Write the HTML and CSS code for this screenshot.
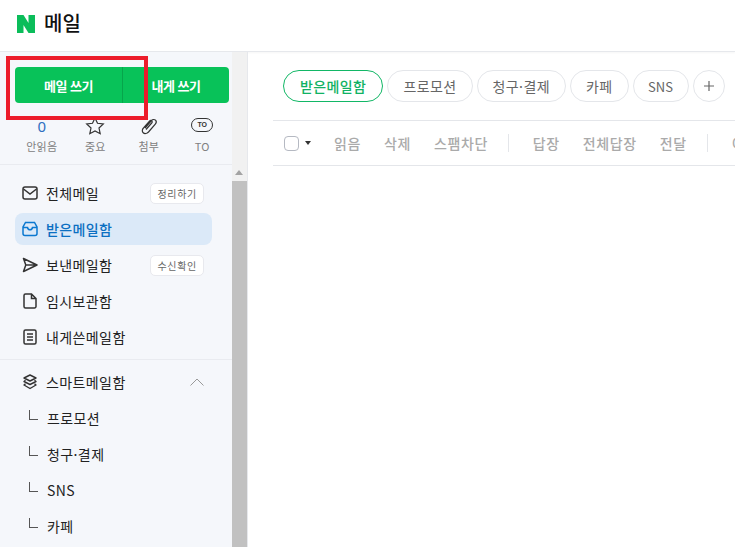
FILE: index.html
```html
<!DOCTYPE html>
<html lang="ko">
<head>
    <meta charset="UTF-8">
    <meta name="viewport" content="width=device-width, initial-scale=1.0">
    <title>메일</title>
    <link rel="stylesheet" href="styles.css">
</head>
<body>
    <div class="header">
        <svg class="logo" width="18" height="18" viewBox="0 0 18 18"><path d="M0 0h6.500l5 8V0H18v18h-6.500l-5-8v8H0z" fill="#0bbd5a"/></svg>
        <h1>메일</h1>
    </div>

    <div class="main">
        <div class="sidebar">
            <div class="sidebar-inner">
                <div class="compose">
                    <a class="compose-btn first">메일 쓰기</a>
                    <a class="compose-btn">내게 쓰기</a>
                </div>
                <div class="quick">
                    <div class="quick-item">
                        <span class="quick-num">0</span>
                        <span class="quick-label">안읽음</span>
                    </div>
                    <div class="quick-item">
                        <svg width="20" height="18" viewBox="0 0 20 18"><path d="M10 1l2.500 5.300 5.800.7-4.300 4 1.200 5.700L10 13.900l-5.200 2.800L6 11l-4.300-4 5.800-.7z" fill="none" stroke="#333" stroke-width="1.200"/></svg>
                        <span class="quick-label">중요</span>
                    </div>
                    <div class="quick-item">
                        <svg width="20" height="18" viewBox="0 0 20 18"><path d="M6 11l6.500-7.500c1.200-1.300 3-1.300 4-.3s.9 2.700-.2 4L9.500 15c-1.600 1.700-4 2-5.300.8S3 12.500 4.500 11l6-6.800c.7-.8 1.700-.8 2.300-.3s.5 1.400-.1 2.100L7 12.500" fill="none" stroke="#333" stroke-width="1.200"/></svg>
                        <span class="quick-label">첨부</span>
                    </div>
                    <div class="quick-item">
                        <span class="to-icon">TO</span>
                        <span class="quick-label">TO</span>
                    </div>
                </div>

                <ul class="nav">
                    <li class="nav-item">
                        <svg width="16" height="16" viewBox="0 0 16 16"><rect x="1" y="2" width="14" height="12" rx="2" fill="none" stroke="#333" stroke-width="1.500"/><path d="M1.500 4l6.500 5 6.500-5" fill="none" stroke="#333" stroke-width="1.500"/></svg>
                        <span class="nav-text">전체메일</span>
                        <span class="nav-tag">정리하기</span>
                    </li>
                    <li class="nav-item active">
                        <svg width="16" height="16" viewBox="0 0 16 16"><path d="M3.500 1.500h9L15 6v6.500a2 2 0 0 1-2 2H3a2 2 0 0 1-2-2V6z M1 6.500h4.500c.3 1.500 1.200 2.200 2.500 2.200s2.200-.7 2.500-2.200H15" fill="none" stroke="#0b78d0" stroke-width="1.500"/></svg>
                        <span class="nav-text">받은메일함</span>
                    </li>
                    <li class="nav-item">
                        <svg width="16" height="16" viewBox="0 0 16 16"><path d="M1.500 1.500L15 8 1.500 14.500 3.800 8zM3.800 8H15" fill="none" stroke="#333" stroke-width="1.500" stroke-linejoin="round"/></svg>
                        <span class="nav-text">보낸메일함</span>
                        <span class="nav-tag">수신확인</span>
                    </li>
                    <li class="nav-item">
                        <svg width="16" height="16" viewBox="0 0 16 16"><path d="M3.500 1h6L14 5.500V13.500a1.500 1.500 0 0 1-1.500 1.500h-9A1.500 1.500 0 0 1 2 13.500v-11A1.500 1.500 0 0 1 3.500 1zM9.500 1v4.500H14" fill="none" stroke="#333" stroke-width="1.500"/></svg>
                        <span class="nav-text">임시보관함</span>
                    </li>
                    <li class="nav-item">
                        <svg width="16" height="16" viewBox="0 0 16 16"><rect x="2" y="1" width="12" height="14" rx="1.500" fill="none" stroke="#333" stroke-width="1.500"/><path d="M5 5h6M5 8h6M5 11h6" stroke="#333" stroke-width="1.300"/></svg>
                        <span class="nav-text">내게쓴메일함</span>
                    </li>
                </ul>

                <ul class="nav smart">
                    <li class="nav-item">
                        <svg width="16" height="16" viewBox="0 0 16 16"><path d="M8 1l6 3-6 3-6-3zM3.500 6.200L2 7.500l6 3 6-3-1.500-1.300M3.500 9.700L2 11l6 3.500 6-3.500-1.500-1.300" fill="none" stroke="#333" stroke-width="1.400" stroke-linejoin="round"/></svg>
                        <span class="nav-text">스마트메일함</span>
                        <svg class="chevron" width="14" height="8" viewBox="0 0 14 8"><path d="M.5 7.500L7 1l6.500 6.500" fill="none" stroke="#999" stroke-width="1"/></svg>
                    </li>
                    <li class="sub-item"><span class="sub-mark"></span>프로모션</li>
                    <li class="sub-item"><span class="sub-mark"></span>청구·결제</li>
                    <li class="sub-item"><span class="sub-mark"></span>SNS</li>
                    <li class="sub-item"><span class="sub-mark"></span>카페</li>
                </ul>
            </div>
            <div class="scrollbar">
                <div class="scroll-up"></div>
                <div class="scroll-thumb"></div>
            </div>
        </div>

        <div class="content">
            <div class="tabs">
                <span class="tab selected">받은메일함</span>
                <span class="tab">프로모션</span>
                <span class="tab">청구·결제</span>
                <span class="tab">카페</span>
                <span class="tab latin">SNS</span>
                <span class="tab plus"><svg width="12" height="12" viewBox="0 0 12 12"><path d="M6 1v10M1 6h10" stroke="#666" stroke-width="1.200"/></svg></span>
            </div>
            <div class="toolbar">
                <span class="check"></span>
                <span class="caret"></span>
                <span class="tool first">읽음</span>
                <span class="tool">삭제</span>
                <span class="tool">스팸차단</span>
                <span class="tool-sep"></span>
                <span class="tool">답장</span>
                <span class="tool">전체답장</span>
                <span class="tool">전달</span>
                <span class="tool-sep"></span>
                <span class="tool">이동</span>
            </div>
        </div>
    </div>

    <!-- 빨간 강조 표시 -->
    <div class="highlight"></div>
</body>
</html>
```

FILE: styles.css
```css
html, body {
    margin: 0;
    height: 547px;
    overflow: hidden;
}
body {
    position: relative;
    font-family: "Noto Sans CJK KR", "Noto Sans", sans-serif;
    color: #222;
    background-color: #fff;
}
.header {
    display: flex;
    align-items: center;
    height: 52px;
    padding: 0 0 4px 17px;
    box-sizing: border-box;
    border-bottom: 1px solid #e6e8ec;
    box-shadow: 0 1px 2px rgba(0, 0, 0, 0.04);
}
.header h1 {
    margin: 0 0 2px 9px;
    font-size: 20px;
    font-weight: 500;
    color: #111;
}
.main {
    display: flex;
    height: 495px;
}
.sidebar {
    display: flex;
    width: 248px;
    box-sizing: border-box;
    border-right: 1px solid #e6e8ec;
    background-color: #f5f7fb;
}
.sidebar-inner {
    width: 232px;
    flex-shrink: 0;
}
.compose {
    display: flex;
    margin: 15px 3px 0 15px;
    height: 36px;
    background-color: #08c259;
    border-radius: 4px;
}
.compose-btn {
    flex: 1;
    display: flex;
    align-items: center;
    justify-content: center;
    font-size: 13px;
    font-weight: 700;
    color: #fff;
    letter-spacing: -0.5px;
}
.compose-btn.first {
    flex: none;
    width: 107px;
    border-right: 1px solid #06a54b;
}
.quick {
    display: flex;
    height: 47px;
    margin-top: 14px;
    padding: 0 0 0 15px;
    border-bottom: 1px solid #e9ebf0;
}
.quick-item {
    width: 53.500px;
    display: flex;
    flex-direction: column;
    align-items: center;
    height: 36px;
    justify-content: space-between;
}
.quick-num {
    font-size: 15px;
    line-height: 18px;
    color: #2f6fc0;
    font-family: "Noto Sans", sans-serif;
}
.quick-label {
    font-size: 11px;
    line-height: 14px;
    color: #808080;
    letter-spacing: 0.2px;
}
.to-icon {
    display: block;
    width: 20px;
    height: 12px;
    margin-top: 1px;
    border: 1.500px solid #333;
    border-radius: 8px;
    font-size: 7px;
    font-weight: 700;
    line-height: 12px;
    text-align: center;
    color: #333;
    font-family: "Liberation Sans", sans-serif;
}
.nav {
    list-style: none;
    margin: 0;
    padding: 12px 20px 6px 15px;
    border-bottom: 1px solid #e9ebf0;
    display: flex;
    flex-direction: column;
    gap: 4px;
}
.nav.smart {
    border-bottom: none;
    padding-top: 6px;
}
.nav-item {
    display: flex;
    align-items: center;
    height: 32px;
    padding: 0 8px 0 7px;
    font-size: 14px;
    letter-spacing: 0.4px;
    border-radius: 8px;
    color: #222;
}
.nav-text {
    margin-left: 8px;
    flex: 1;
}
.nav-item.active {
    background-color: #dbe9f8;
    color: #0b6fc2;
    font-weight: 500;
}
.nav-tag {
    font-size: 10px;
    line-height: 19px;
    padding: 0 6px;
    letter-spacing: 0.7px;
    color: #666;
    background-color: #fff;
    border: 1px solid #e8e9ee;
    border-radius: 5px;
}
.sub-item {
    display: flex;
    align-items: center;
    height: 32px;
    font-size: 14px;
    letter-spacing: 0.4px;
    color: #222;
    padding-left: 14px;
}
.sub-mark {
    width: 8px;
    height: 9px;
    margin: -6px 9px 0 0;
    border-left: 1px solid #555;
    border-bottom: 1px solid #555;
}
.scrollbar {
    width: 15px;
    flex-shrink: 0;
    background-color: #f1f1f1;
    display: flex;
    flex-direction: column;
}
.scroll-up {
    height: 16px;
    position: relative;
    margin-top: 113px;
}
.scroll-up::after {
    content: "";
    position: absolute;
    left: 3px;
    top: 5px;
    border-left: 4px solid transparent;
    border-right: 4px solid transparent;
    border-bottom: 5px solid #a3a3a3;
}
.scroll-thumb {
    flex: 1;
    background-color: #c1c1c1;
}
.content {
    flex: 1;
    min-width: 0;
    overflow: hidden;
    padding-left: 25px;
}
.tabs {
    display: flex;
    gap: 4px;
    margin: 18px 0 0 10px;
}
.tab {
    display: flex;
    align-items: center;
    justify-content: center;
    box-sizing: border-box;
    height: 32px;
    padding: 0 15px;
    border: 1px solid #e4e6ea;
    border-radius: 16px;
    font-size: 14px;
    letter-spacing: 0.4px;
    color: #666;
    white-space: nowrap;
}
.tab.selected {
    padding: 0 16px;
    border-color: #12b766;
    color: #10b263;
    font-weight: 500;
}
.tab.latin {
    width: 56px;
    padding: 0;
    font-size: 13px;
    letter-spacing: 0;
}
.tab.plus {
    width: 32px;
    padding: 0;
}
.toolbar {
    display: flex;
    align-items: center;
    height: 44px;
    width: 600px;
    margin-top: 18px;
    border-top: 1px solid #e4e6ea;
    border-bottom: 1px solid #e4e6ea;
    white-space: nowrap;
}
.check {
    width: 13px;
    height: 13px;
    margin-left: 11px;
    border: 1px solid #b5b9c2;
    border-radius: 4px;
}
.caret {
    margin-left: 6px;
    border-left: 3.500px solid transparent;
    border-right: 3.500px solid transparent;
    border-top: 4px solid #333;
}
.tool {
    margin-left: 23px;
    font-size: 14px;
    font-weight: 500;
    letter-spacing: 0.6px;
    color: #aaa;
}
.tool-sep {
    width: 1px;
    height: 18px;
    margin-left: 20px;
    background-color: #e4e6ea;
}
.tool-sep + .tool {
    margin-left: 24px;
}
.highlight {
    position: absolute;
    left: 6px;
    top: 56px;
    width: 142px;
    height: 64px;
    box-sizing: border-box;
    border: 4px solid #ec1c2b;
}
```
